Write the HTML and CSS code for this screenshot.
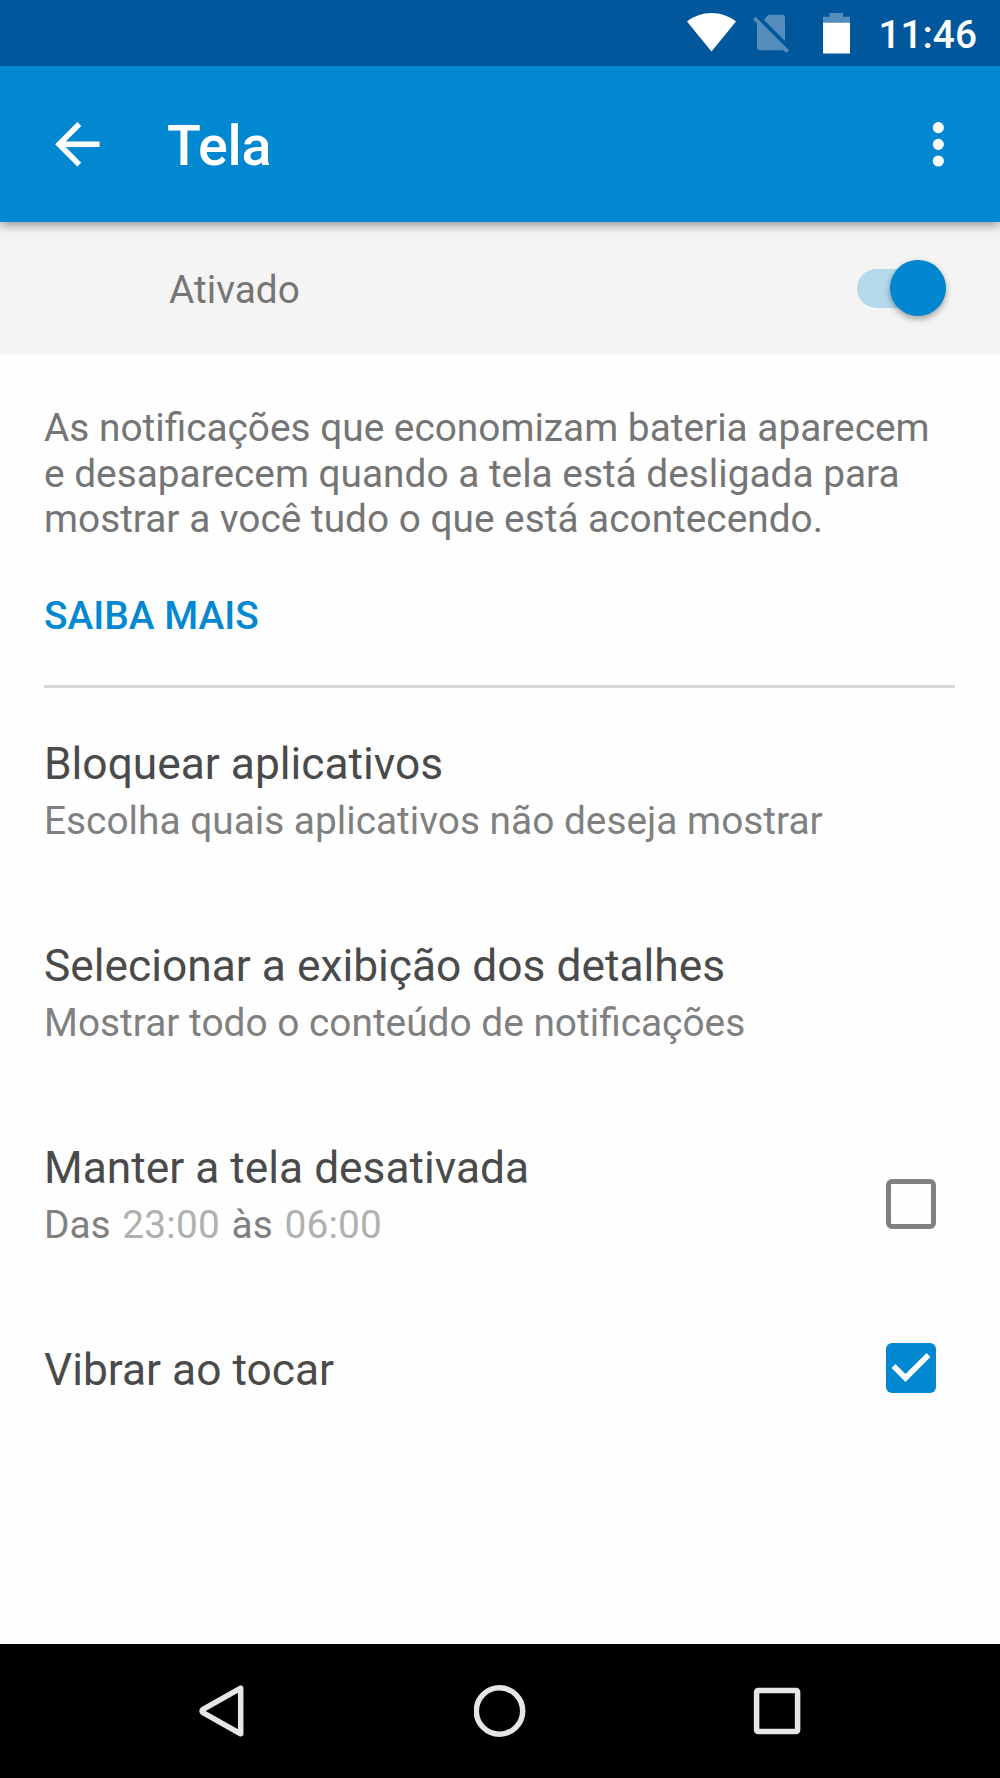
FILE: index.html
```
<!DOCTYPE html>
<html lang="pt-BR">
<head>
    <meta charset="UTF-8">
    <meta name="viewport" content="width=device-width, initial-scale=1.0">

    <title>Tela</title>
    <link rel="stylesheet" href="styles.css">
</head>
<body>
    <div class="status-bar">
        <svg class="wifi" width="49" height="40" viewBox="0 0 49 40">
            <path d="M24.500 39.500L0 9.500C7 4 15.500 1 24.500 1S42 4 49 9.500z"/>
        </svg>
        <svg class="sim" width="37" height="40" viewBox="0 0 37 40">
            <path d="M11 6L14 2Q15.200 0.700 17 0.700H29Q32 0.700 32 3.700V27z"/>
            <path d="M4 8L31.500 36.300H7Q4 36.300 4 33.300z"/>
            <path d="M2.500 2.700L36 36.200L33.300 39L0 5.500z"/>
        </svg>
        <svg class="battery" width="27" height="41" viewBox="0 0 27 41">
            <path class="empty" d="M6.500 0h13.500v3.700H27v6H0v-6h6.500z"/>
            <path d="M0 9.700h27V40.500H0z"/>
        </svg>
        <span class="clock">11:46</span>
    </div>

    <header class="app-bar">
        <svg class="back" width="66.67" height="66.67" viewBox="0 0 24 24">
            <path d="M20 11H7.830l5.590-5.590L12 4l-8 8 8 8 1.410-1.410L7.830 13H20v-2z"/>
        </svg>
        <h1>Tela</h1>
        <svg class="more" width="66.67" height="66.67" viewBox="0 0 24 24">
            <circle cx="12" cy="6" r="2"/>
            <circle cx="12" cy="12" r="2"/>
            <circle cx="12" cy="18" r="2"/>
        </svg>
    </header>

    <div class="switch-bar">
        <span>Ativado</span>
        <div class="switch"><div class="thumb"></div></div>
    </div>

    <main>
        <p class="description">As notificações que economizam bateria aparecem<br>e desaparecem quando a tela está desligada para<br>mostrar a você tudo o que está acontecendo.</p>
        <a class="learn-more">SAIBA MAIS</a>

        <div class="item">
            <div>
                <h2>Bloquear aplicativos</h2>
                <p>Escolha quais aplicativos não deseja mostrar</p>
            </div>
        </div>
        <div class="item">
            <div>
                <h2>Selecionar a exibição dos detalhes</h2>
                <p>Mostrar todo o conteúdo de notificações</p>
            </div>
        </div>
        <div class="item">
            <div>
                <h2>Manter a tela desativada</h2>
                <p>Das <span class="time">23:00</span> às <span class="time">06:00</span></p>
            </div>
            <div class="checkbox"></div>
        </div>
        <div class="item single">
            <h2>Vibrar ao tocar</h2>
            <div class="checkbox checked">
                <svg width="50" height="50" viewBox="3 3 18 18">
                    <path d="M10 17l-5-5 1.410-1.410L10 14.170l7.590-7.590L19 8l-9 9z"/>
                </svg>
            </div>
        </div>
    </main>

    <nav class="nav-bar">
        <svg width="52" height="54" viewBox="0 0 52 54">
            <path d="M44.700 4.200V49.800L7 28.600Q5 27 7 25.400z"/>
        </svg>
        <svg width="52" height="54" viewBox="0 0 52 54">
            <circle cx="25.500" cy="27" r="23.200"/>
        </svg>
        <svg width="52" height="54" viewBox="0 0 52 54">
            <rect x="5.600" y="6.500" width="41" height="41" rx="1.500"/>
        </svg>
    </nav>
</body>
</html>
```

FILE: styles.css
```
body {
    margin: 0;
    height: 1778px;
    display: flex;
    flex-direction: column;
    background-color: #fefefe;
    font-family: Roboto, sans-serif;
    font-size: 38.85px;
    line-height: 45.6px;
    color: #757575;
    overflow: hidden;
}

h1, h2, p {
    margin: 0;
}

svg {
    display: block;
    flex: none;
}

.status-bar {
    height: 66px;
    flex: none;
    box-sizing: border-box;
    padding: 12px 23px 0 0;
    display: flex;
    justify-content: flex-end;
    background-color: #01579b;
    color: white;
    fill: white;
    position: relative;
    z-index: 2;
}
.sim {
    margin: 2px 0 0 17px;
    opacity: 0.33;
}
.battery {
    margin: 1px 0 0 33px;
}
.battery .empty {
    opacity: 0.33;
}
.clock {
    margin-left: 28px;
    font-weight: 500;
}

.app-bar {
    height: 156px;
    flex: none;
    box-sizing: border-box;
    padding: 0 28px 0 44.4px;
    display: flex;
    align-items: center;
    background-color: #0288d1;
    color: white;
    fill: white;
    box-shadow: 0 3px 10px rgba(0, 0, 0, 0.4);
    z-index: 1;
}
.app-bar h1 {
    flex: 1;
    margin: 4px 0 0 56px;
    font-size: 55.6px;
    font-weight: 500;
    line-height: 65px;
    letter-spacing: -0.3px;
}

.switch-bar {
    height: 133px;
    flex: none;
    box-sizing: border-box;
    padding: 0 54.5px 0 169px;
    display: flex;
    align-items: center;
    justify-content: space-between;
    background-color: #f4f4f4;
}
.switch-bar span {
    margin-top: 3px;
}
.switch {
    width: 88.5px;
    height: 39px;
    margin-top: -1px;
    display: flex;
    align-items: center;
    justify-content: flex-end;
    border-radius: 20px;
    background-color: #b5d9eb;
}
.thumb {
    width: 55.6px;
    height: 55.6px;
    flex: none;
    border-radius: 50%;
    background-color: #0286d0;
    box-shadow: 0 3px 6px rgba(0, 0, 0, 0.35);
}

main {
    flex: 1;
    padding: 50px 45px 0 44px;
}
.description {
    font-size: 38.8px;
}
.learn-more {
    display: block;
    margin-top: 51px;
    padding-bottom: 46.5px;
    margin-bottom: 50.5px;
    border-bottom: 3px solid #d8d8d8;
    color: #0288d1;
    font-weight: 500;
}

.item {
    height: 201.8px;
    display: flex;
    justify-content: space-between;
    align-items: flex-start;
}
.item h2 {
    font-size: 44.3px;
    font-weight: 400;
    line-height: 52px;
    color: #4a4a4a;
}
.item p {
    margin-top: 7.7px;
    color: #808080;
}
.item .time {
    margin: 0 2px;
    letter-spacing: 0.2px;
    color: #b0b0b0;
}
.checkbox {
    width: 50px;
    height: 50px;
    box-sizing: border-box;
    margin: 37.500px 19.5px 0 0;
    border: 5.5px solid #808080;
    border-radius: 6px;
}
.single .checkbox {
    margin-top: -0.5px;
}
.checked {
    border: none;
    background-color: #0288d1;
    fill: white;
}

.nav-bar {
    height: 134px;
    flex: none;
    box-sizing: border-box;
    padding: 0 197px 0 196px;
    display: flex;
    align-items: center;
    justify-content: space-between;
    background-color: black;
    fill: none;
    stroke: #e6e6e6;
    stroke-width: 5.5px;
    stroke-linejoin: round;
}
```
